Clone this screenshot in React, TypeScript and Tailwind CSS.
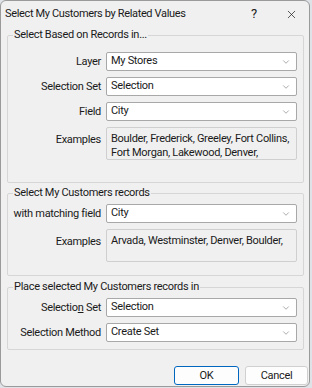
import { ChevronDown, X } from 'lucide-react';

// Combo box look-alike
const Combo = ({ value }: { value: string }) => (
  <div className="h-[19px] flex items-center justify-between bg-white border border-[#a8a8a8] rounded-[2px] pl-[4px] pr-[5px]">
    <span>{value}</span>
    <ChevronDown className="w-[10px] h-[10px] text-[#7a7a7a]" strokeWidth={1.5} />
  </div>
);

const Examples = ({ lines }: { lines: string[] }) => (
  <div className="h-[33px] border border-[#cfcfcf] rounded-[2px] bg-[#f0f0f0] pl-[4px] pt-[4px] leading-[14px] whitespace-nowrap overflow-hidden">
    {lines.map((l) => (
      <div key={l}>{l}</div>
    ))}
  </div>
);

const Row = ({ label, children }: { label: React.ReactNode; children: React.ReactNode }) => (
  <>
    <div className="text-right self-center leading-[16px] whitespace-nowrap">{label}</div>
    {children}
  </>
);

const Group = ({ title, className, children }: { title: string; className?: string; children: React.ReactNode }) => (
  <fieldset className={`shrink-0 border border-[#d6d6d6] rounded-[2px] ${className ?? ''}`}>
    <legend className="ml-[5px] px-[1px] leading-[16px]">{title}</legend>
    <div className="grid grid-cols-[93px_1fr] gap-x-[5px] pr-[6px]">{children}</div>
  </fieldset>
);

export default function App() {
  return (
    <div className="w-[312px] h-[388px] bg-[#dfe3e8]">
      <div
        className="w-[310px] h-[387px] bg-[#f0f0f0] border border-[#9a9a9a] rounded-[6px] flex flex-col text-[11px] tracking-[-0.3px] text-[#1a1a1a] overflow-hidden"
        style={{ fontFamily: 'Roboto, "Noto Sans", sans-serif' }}
      >
        {/* Title bar */}
        <div className="h-[26px] shrink-0 flex items-center pl-[4px]">
          <span className="flex-1 tracking-[-0.35px]">Select My Customers by Related Values</span>
          <span className="w-[14px] text-center mr-[24px] text-[13px]">?</span>
          <X className="w-[13px] h-[13px] mr-[11px]" strokeWidth={1.3} />
        </div>

        <div className="flex flex-col pl-[6px] pr-[5px]">
          <Group title="Select Based on Records in..." className="pb-[22px]">
            <div className="col-span-2 h-[9px]" />
            <Row label="Layer"><Combo value="My Stores" /></Row>
            <div className="col-span-2 h-[6px]" />
            <Row label="Selection Set"><Combo value="Selection" /></Row>
            <div className="col-span-2 h-[6px]" />
            <Row label="Field"><Combo value="City" /></Row>
            <div className="col-span-2 h-[6px]" />
            <div className="text-right pt-[5px] leading-[16px]">Examples</div>
            <Examples lines={['Boulder, Frederick, Greeley, Fort Collins,', 'Fort Morgan, Lakewood, Denver,']} />
          </Group>

          <Group title="Select My Customers records" className="mt-[2px] pb-[13px]">
            <div className="col-span-2 h-[3px]" />
            <Row label="with matching field"><Combo value="City" /></Row>
            <div className="col-span-2 h-[6px]" />
            <div className="text-right pt-[5px] leading-[16px]">Examples</div>
            <Examples lines={['Arvada, Westminster, Denver, Boulder,']} />
          </Group>

          <Group title="Place selected My Customers records in" className="mt-[3px] pb-[7px]">
            <div className="col-span-2 h-[3px]" />
            <Row label={<>Selectio<u>n</u> Set</>}><Combo value="Selection" /></Row>
            <div className="col-span-2 h-[6px]" />
            <Row label="Selection Method"><Combo value="Create Set" /></Row>
          </Group>
        </div>

        <div className="flex justify-end gap-[6px] mt-auto mb-[1px] pr-[1px] shrink-0">
          <button className="w-[65px] h-[19px] bg-[#fdfdfd] border border-[#0067c0] rounded-[3px] leading-none">OK</button>
          <button className="w-[63px] h-[19px] bg-[#fdfdfd] border border-[#d0d0d0] rounded-[3px] leading-none">Cancel</button>
        </div>
      </div>
    </div>
  );
}
